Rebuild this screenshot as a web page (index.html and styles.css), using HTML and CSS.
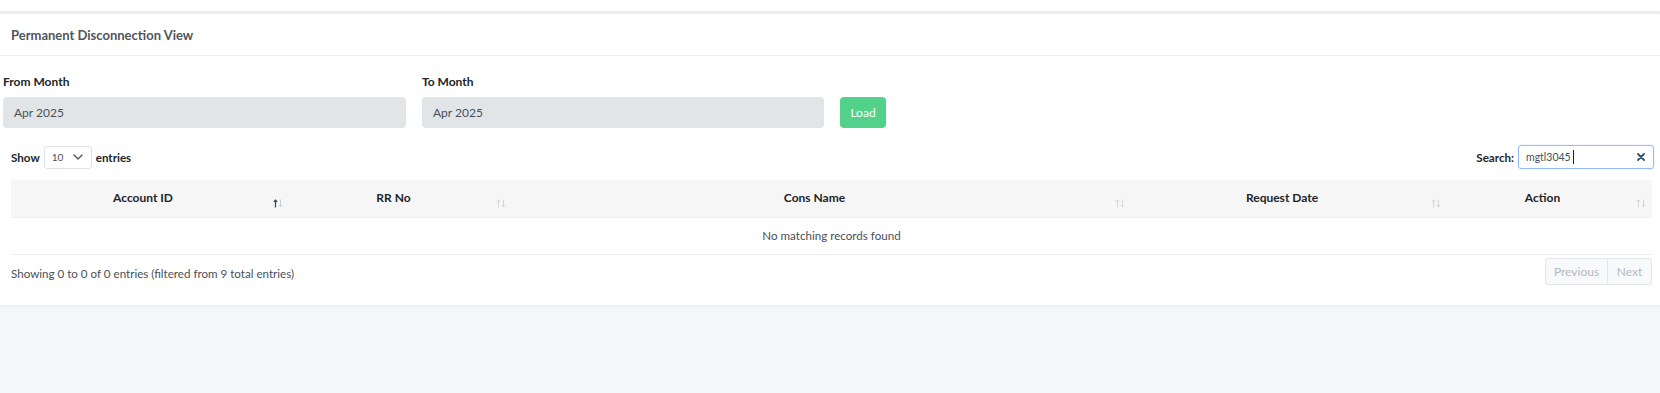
FILE: index.html
```html
<!DOCTYPE html>
<html lang="en">
<head>
<meta charset="utf-8">
<title>Permanent Disconnection View</title>
<link rel="stylesheet" href="styles.css">
</head>
<body>
<div class="topbar"></div>
<section class="card">
  <header class="card-header">Permanent Disconnection View</header>
  <div class="card-body">
    <div class="filters">
      <div class="field field-from">
        <label class="field-label">From Month</label>
        <div class="month-input">Apr 2025</div>
      </div>
      <div class="field field-to">
        <label class="field-label">To Month</label>
        <div class="month-input">Apr 2025</div>
      </div>
      <button class="btn-load">Load</button>
    </div>

    <div class="dt-top">
      <div class="dt-length">
        <span>Show</span>
        <span class="select">
          <span class="select-val">10</span>
          <svg class="chev" width="10" height="6" viewBox="0 0 10 6"><path d="M1 1l4 4 4-4" fill="none" stroke="#495057" stroke-width="1.3" stroke-linecap="round" stroke-linejoin="round"/></svg>
        </span>
        <span>entries</span>
      </div>
      <div class="dt-search">
        <span>Search:</span>
        <span class="search-box">
          <span class="search-text">mgtl3045</span><span class="caret"></span>
          <span class="spacer"></span>
          <svg class="clear" width="8" height="8" viewBox="0 0 8 8"><path d="M1 1l6 6M7 1L1 7" stroke="#33506f" stroke-width="1.8" stroke-linecap="round"/></svg>
        </span>
      </div>
    </div>

    <table class="dt">
      <colgroup>
        <col class="c1"><col class="c2"><col class="c3"><col class="c4"><col class="c5">
      </colgroup>
      <thead>
        <tr>
          <th class="sorted">Account ID<span class="sort"><svg width="10" height="9" viewBox="0 0 10 9"><path class="up" d="M2.5 8.5V1M0.8 2.8L2.5 1l1.7 1.8"/><path class="down" d="M7.5 0.5V8M5.8 6.2L7.5 8l1.7-1.8"/></svg></span></th>
          <th>RR No<span class="sort"><svg width="10" height="9" viewBox="0 0 10 9"><path class="up off" d="M2.5 8.5V1M0.8 2.8L2.5 1l1.7 1.8"/><path class="down" d="M7.5 0.5V8M5.8 6.2L7.5 8l1.7-1.8"/></svg></span></th>
          <th>Cons Name<span class="sort"><svg width="10" height="9" viewBox="0 0 10 9"><path class="up off" d="M2.5 8.5V1M0.8 2.8L2.5 1l1.7 1.8"/><path class="down" d="M7.5 0.5V8M5.8 6.2L7.5 8l1.7-1.8"/></svg></span></th>
          <th>Request Date<span class="sort"><svg width="10" height="9" viewBox="0 0 10 9"><path class="up off" d="M2.5 8.5V1M0.8 2.8L2.5 1l1.7 1.8"/><path class="down" d="M7.5 0.5V8M5.8 6.2L7.5 8l1.7-1.8"/></svg></span></th>
          <th>Action<span class="sort"><svg width="10" height="9" viewBox="0 0 10 9"><path class="up off" d="M2.5 8.5V1M0.8 2.8L2.5 1l1.7 1.8"/><path class="down" d="M7.5 0.5V8M5.8 6.2L7.5 8l1.7-1.8"/></svg></span></th>
        </tr>
      </thead>
      <tbody>
        <tr><td colspan="5" class="empty">No matching records found</td></tr>
      </tbody>
    </table>

    <div class="dt-bottom">
      <div class="dt-info">Showing 0 to 0 of 0 entries (filtered from 9 total entries)</div>
      <div class="pager">
        <span class="pg pg-prev">Previous</span><span class="pg pg-next">Next</span>
      </div>
    </div>
  </div>
</section>
</body>
</html>
```

FILE: styles.css
```css
* { box-sizing: border-box; }
html, body { margin: 0; padding: 0; }
body {
  background: #f5f6f8;
  font-family: Lato, "Noto Sans", "Liberation Sans", sans-serif;
  color: #495057;
  font-size: 11.6px;
  height: 393px;
}
.topbar {
  height: 14px;
  background: #fff;
  border-bottom: 3px solid #ebedf0;
}
.card {
  background: #fff;
  box-shadow: 0 1px 3px rgba(0,0,0,0.06);
}
.card-header {
  height: 42px;
  border-bottom: 1px solid #eceef0;
  padding: 0 11px;
  display: flex;
  align-items: center;
  font-size: 13px;
  font-weight: 700;
  color: #50565e;
}
.card-body {
  padding: 18px 7px 20px 11px;
}
.filters {
  display: flex;
  align-items: flex-end;
  gap: 16px;
  margin-left: -8px;
}
.field { display: flex; flex-direction: column; }
.field-from { width: 403px; }
.field-to { width: 402px; }
.field-label {
  font-size: 12px;
  font-weight: 700;
  color: #212529;
  line-height: 16px;
  margin-bottom: 7px;
}
.month-input {
  height: 31px;
  background: #e2e5e8;
  border-radius: 4px;
  padding-left: 11px;
  display: flex;
  align-items: center;
  font-size: 12px;
  color: #495057;
}
.btn-load {
  width: 46px;
  height: 31px;
  border: 0;
  border-radius: 4px;
  background: #52d18b;
  color: #fff;
  font-family: inherit;
  font-size: 12px;
  padding: 0;
}
.dt-top {
  display: flex;
  justify-content: space-between;
  align-items: center;
  margin-top: 17px;
  height: 24px;
  margin-right: -1px;
}
.dt-length, .dt-search {
  display: flex;
  align-items: center;
  font-size: 11.6px;
  font-weight: 700;
  color: #212529;
}
.select {
  display: inline-flex;
  align-items: center;
  width: 48px;
  height: 23px;
  margin: 0 4px;
  border: 1px solid #dee2e6;
  border-radius: 3px;
  padding-left: 7px;
  font-weight: 400;
  font-size: 10px;
  color: #495057;
}
.select-val { width: 21px; }
.dt-search span:first-child { margin-right: 4px; }
.search-box {
  display: inline-flex;
  align-items: center;
  width: 136px;
  height: 24px;
  border: 1px solid #93bdf7;
  border-radius: 3px;
  padding: 0 8px 0 7px;
  font-weight: 400;
  font-size: 10.5px;
  color: #495057;
  box-shadow: 0 0 0 1px rgba(13,110,253,0.06);
}
.caret {
  width: 1px;
  height: 14px;
  background: #222;
  margin-left: -2px;
}
.spacer { flex: 1; }
.dt {
  width: 1641px;
  margin-top: 11px;
  border-collapse: collapse;
  table-layout: fixed;
}
.c1 { width: 278px; }
.c2 { width: 223px; }
.c3 { width: 619px; }
.c4 { width: 316px; }
.c5 { width: 205px; }
.dt th {
  position: relative;
  height: 37px;
  background: #f6f6f6;
  border-bottom: 1px solid #eceef0;
  padding: 0 24px 2px 10px;
  text-align: center;
  font-size: 12px;
  font-weight: 700;
  color: #212529;
}
.sort {
  position: absolute;
  right: 6px;
  top: 19px;
  line-height: 0;
}
.sort path {
  fill: none;
  stroke: #d2d5da;
  stroke-width: 1;
}
.sorted .sort path.up { stroke: #3b4454; stroke-width: 1.2; }
.sorted .sort path.down { stroke: #c9ccd2; }
.dt td {
  height: 37px;
  border-bottom: 1px solid #eceef0;
  text-align: center;
  color: #495057;
  padding: 0;
}
.dt-bottom {
  display: flex;
  justify-content: space-between;
  align-items: flex-start;
}
.dt-info {
  padding-top: 11px;
  line-height: 16px;
}
.pager {
  display: flex;
  margin-top: 3px;
  margin-right: 1px;
}
.pg {
  height: 27px;
  display: flex;
  align-items: center;
  justify-content: center;
  border: 1px solid #e3e6ea;
  background: #f8f9fa;
  color: #b3b8be;
  font-size: 12px;
}
.pg-prev { width: 63px; border-radius: 3px 0 0 3px; }
.pg-next { width: 44px; border-left: 0; border-radius: 0 3px 3px 0; }
```
